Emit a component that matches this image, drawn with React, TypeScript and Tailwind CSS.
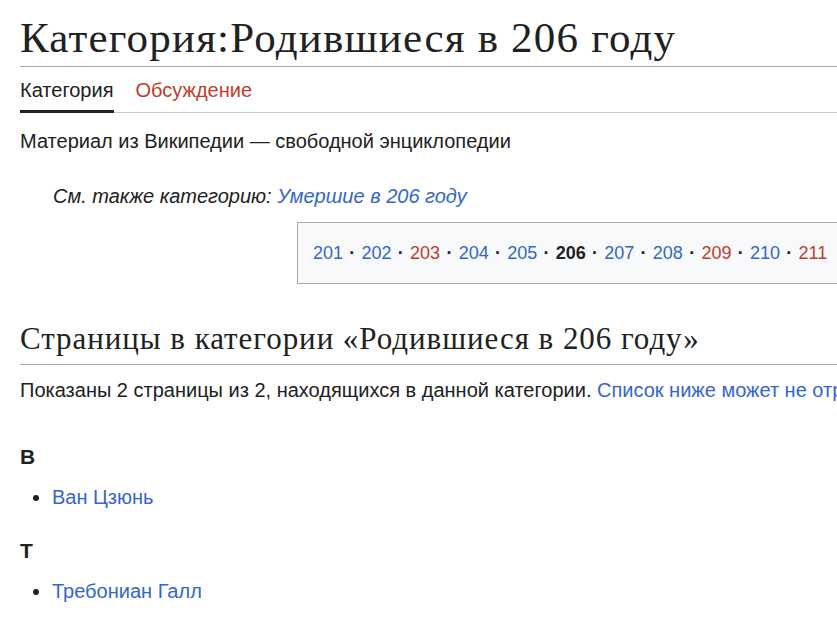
import React from "react";

const years = [
  { y: 201, kind: "blue" },
  { y: 202, kind: "blue" },
  { y: 203, kind: "red" },
  { y: 204, kind: "blue" },
  { y: 205, kind: "blue" },
  { y: 206, kind: "current" },
  { y: 207, kind: "blue" },
  { y: 208, kind: "blue" },
  { y: 209, kind: "red" },
  { y: 210, kind: "blue" },
  { y: 211, kind: "red" },
];

const groups = [
  { letter: "В", pages: ["Ван Цзюнь"], gap: "mt-[41px]" },
  { letter: "Т", pages: ["Требониан Галл"], gap: "mt-[28px]" },
];

export default function App() {
  return (
    <div className="w-[837px] h-[624px] overflow-hidden bg-white text-[#202122] font-['Liberation_Sans',Arial,sans-serif] text-[20px] leading-[30px]">
      <div className="w-[1100px] pl-5">
        <h1 className="font-['Liberation_Serif','Times_New_Roman',serif] text-[43px] tracking-[1.2px] leading-[1.2] pt-[12px] pb-[2px] border-b border-[#a2a9b1]">
          Категория:Родившиеся в 206 году
        </h1>

        <div className="flex gap-[22px] border-b border-[#c8ccd1] mt-[11px] leading-[24px]">
          <div className="pb-[8px] border-b-[3px] border-[#202122] -mb-px">Категория</div>
          <div className="text-[#bf3c2c]">Обсуждение</div>
        </div>

        <p className="mt-[13px]">Материал из Википедии — свободной энциклопедии</p>

        <p className="mt-[25px] ml-[33px] italic">
          См. также категорию: <span className="text-[#3366cc]">Умершие в 206 году</span>
        </p>

        <div className="ml-[277px] mt-[11px] h-[62px] border border-[#a2a9b1] bg-[#f8f9fa] flex items-center pl-[15px] text-[18px]">
          {years.map((item, i) => (
            <span key={item.y} className="flex items-center">
              {i > 0 && <span className="px-[6.25px] font-bold">·</span>}
              <span
                className={
                  item.kind === "current"
                    ? "font-bold"
                    : item.kind === "red"
                    ? "text-[#bf3c2c]"
                    : "text-[#3366cc]"
                }
              >
                {item.y}
              </span>
            </span>
          ))}
        </div>

        <h2 className="mt-[36px] font-['Liberation_Serif','Times_New_Roman',serif] text-[31px] tracking-[0.95px] leading-[1.2] pb-[7px] border-b border-[#a2a9b1]">
          Страницы в категории «Родившиеся в 206 году»
        </h2>

        <p className="mt-[10px] whitespace-nowrap">
          Показаны 2 страницы из 2, находящихся в данной категории.{" "}
          <span className="text-[#3366cc]">Список ниже может не отр</span>
        </p>

        {groups.map((g) => (
          <div key={g.letter} className={g.gap}>
            <h3 className="font-bold text-[21px] leading-none">{g.letter}</h3>
            <ul className="mt-[15px] ml-[15px] list-disc pl-[17px]">
              {g.pages.map((p) => (
                <li key={p} className="text-[#3366cc] marker:text-[#202122]">
                  {p}
                </li>
              ))}
            </ul>
          </div>
        ))}
      </div>
    </div>
  );
}
